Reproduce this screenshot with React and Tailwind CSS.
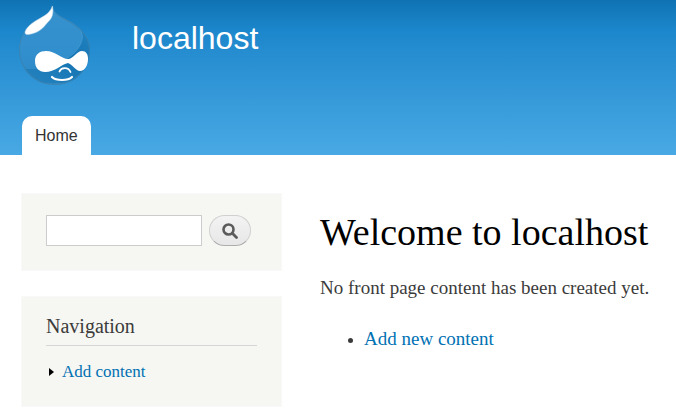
function Logo() {
  return (
    <svg width="74" height="84" viewBox="18 3 74 84" role="img" aria-label="Home">
      <defs>
        <linearGradient id="drop" x1="0" y1="0" x2="0" y2="1">
          <stop offset="0" stopColor="#3792cd" />
          <stop offset="0.6" stopColor="#328fcd" />
          <stop offset="1" stopColor="#2b86c2" />
        </linearGradient>
        <linearGradient id="side" x1="1" y1="0" x2="0.3" y2="1">
          <stop offset="0" stopColor="#2384c3" />
          <stop offset="0.5" stopColor="#1575b3" />
          <stop offset="1" stopColor="#2481be" />
        </linearGradient>
        <clipPath id="body">
          <path d="M52 5C53 10 55 13 60 16C66 19.500 73 22 79 28C86 34 90 41 90 50C90 70 74 85 55 85C35 85 19 69 19 50C19 39 24 29 33 22C41 17 50 15 52 5Z" />
        </clipPath>
      </defs>
      <g clipPath="url(#body)">
        <rect x="18" y="3" width="74" height="84" fill="url(#drop)" />
        <path d="M79 27C82 31 83 35 82 40C80 48 74 54 66 59L50 69H20C26 80 41 86 55 86C74 86 91 71 91 50C91 41 86 32 79 27Z" fill="url(#side)" />
        <path d="M79 28C83 34 83 39 81 43C78 50 73 55 66 59" fill="none" stroke="#55a5da" strokeWidth="1" opacity="0.5" />
        <path d="M31 79C43 85 67 85 79 78L76 84L55 86L35 84Z" fill="#5ba6d3" opacity="0.45" />
        <path d="M52 5C53 10 55 13 60 16C66 19.500 73 22 79 28C86 34 90 41 90 50C90 70 74 85 55 85C35 85 19 69 19 50C19 39 24 29 33 22C41 17 50 15 52 5Z" fill="none" stroke="#3c82ad" strokeWidth="2" opacity="0.75" />
      </g>
      <path d="M52.500 6C49.500 15 41 17 34 22C28 26 25 30 25 33C26 36 32 34 37 32C43 29 45 25 49 21C53 17 53.500 12 52.500 6Z" fill="#fff" stroke="#b9d7e8" strokeWidth="0.500" />
      <path d="M35 61C35 54 40 51 46 51C55 51 62 59 68 59C73 59 77 51 82 51C86 51 88 54 88 59C88 65 85 71 80 71C76 71 72 64 68 63C62 64 55 72 45 72C39 72 35 68 35 61Z" fill="#fff" />
      <path d="M59.500 71.500C61 67.500 68 66.500 70.500 72" fill="none" stroke="#fff" strokeWidth="1.800" strokeLinecap="round" />
      <path d="M52 77C56 81 68 81 72 77" fill="none" stroke="#fff" strokeWidth="2.200" strokeLinecap="round" />
    </svg>
  );
}

export default function App() {
  return (
    <div className="min-h-screen bg-white font-['Liberation_Serif',serif] text-[#3b3b3b]">
      <header className="bg-linear-to-b from-[#0f73b3] via-[#1c87cc] via-20% to-[#48a9e4] px-[18px] pt-[3px] font-['Liberation_Sans',sans-serif]">
        <div className="flex items-start gap-10">
          <a href="#home" className="shrink-0"><Logo /></a>
          <a href="#home" className="pt-[15px] text-[32px] leading-10 text-white">localhost</a>
        </div>
        <nav className="flex px-1 pt-[29px]">
          <a href="#home" className="rounded-t-[10px] bg-white px-[13px] pt-2 pb-[7px] text-base leading-6 text-[#333]">Home</a>
        </nav>
      </header>
      <div className="flex items-start gap-[38px] pt-[38px] pl-[21px]">
        <aside className="flex w-[261px] shrink-0 flex-col gap-[25px]">
          <form className="flex gap-[7px] border border-[#f9f9f9] bg-[#f6f6f2] px-6 pt-[21px] pb-6">
            <input type="text" aria-label="Search" className="h-[31px] w-[156px] border border-[#ccc] bg-white px-1 outline-none" />
            <button type="button" aria-label="Search" className="flex h-[31px] w-[42px] items-center justify-center rounded-full border border-[#d0d0d0] border-b-[#adadad] bg-linear-to-b from-[#f3f3f3] to-[#e7e7e7]">
              <svg width="16" height="16" viewBox="0 0 16 16" fill="none" stroke="#5b5b5b">
                <circle cx="6.500" cy="6.500" r="5" strokeWidth="2.600" />
                <path d="M10.300 10.300L14.500 14.500" strokeWidth="2.800" strokeLinecap="round" />
              </svg>
            </button>
          </form>
          <section className="border border-[#f9f9f9] bg-[#f6f6f2] px-6 pt-[17px] pb-[22px]">
            <h2 className="border-b border-[#d6d6d6] pb-[7px] text-xl leading-6">Navigation</h2>
            <ul className="pt-3.5">
              <li className="flex items-center gap-2 pl-[3px] text-[17px] leading-6">
                <svg width="5" height="8" viewBox="0 0 5 8"><path d="M0 0L5 4L0 8Z" fill="#000" /></svg>
                <a href="#add" className="text-[#0071b3]">Add content</a>
              </li>
            </ul>
          </section>
        </aside>
        <main className="min-w-0 flex-1 pt-[15px]">
          <h1 className="text-[38px] leading-12 whitespace-nowrap text-black">Welcome to localhost</h1>
          <p className="pt-[18px] text-[19px] leading-7 whitespace-nowrap">No front page content has been created yet.</p>
          <ul className="list-disc pt-[23px] pl-11 text-[19px] leading-7 marker:text-base">
            <li><a href="#new" className="text-[#0071b3]">Add new content</a></li>
          </ul>
        </main>
      </div>
    </div>
  );
}
